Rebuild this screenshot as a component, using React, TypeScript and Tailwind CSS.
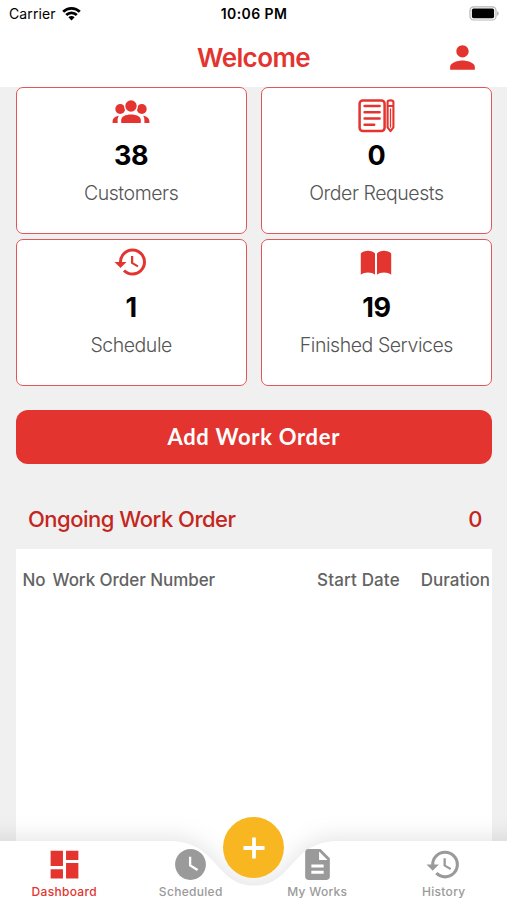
import React from "react";
import {
  MdDashboard,
  MdDescription,
  MdHistory,
  MdPerson,
  MdWatchLater,
} from "react-icons/md";

const CustomersIcon = () => (
  <svg width="38" height="24" viewBox="0 0 38 24" fill="currentColor">
    <circle cx="8.2" cy="9" r="4.9" />
    <circle cx="29.8" cy="9" r="4.9" />
    <circle cx="19" cy="6" r="7" fill="white" />
    <circle cx="19" cy="6" r="5.7" />
    <path d="M9.2 23v-2.6c0-3.7 4.2-5.8 9.8-5.8s9.8 2.1 9.8 5.8V23z" />
    <path d="M.6 23v-1.6c0-2.9 2.4-5.1 6.3-5.6-1 1.5-1.3 2.9-1.3 4.6V23z" />
    <path d="M37.4 23v-1.6c0-2.9-2.4-5.1-6.3-5.6 1 1.5 1.3 2.9 1.3 4.6V23z" />
  </svg>
);

const OrderIcon = () => (
  <svg
    width="37"
    height="34"
    viewBox="0 0 37 34"
    fill="none"
    stroke="currentColor"
    strokeWidth="2.5"
    strokeLinecap="round"
    strokeLinejoin="round"
  >
    <rect x="1.6" y="1.4" width="25" height="30.6" rx="3.2" />
    <path d="M6.6 7h15M6.6 13.2h15M6.6 19.6h15M6.6 25.8h9.6" />
    <path
      d="M29.6 3c0-1.200.8-1.600 2.900-1.600s2.900.4 2.900 1.600v25.400l-2.900 3.800-2.900-3.800zM29.600 7h5.800"
      strokeWidth="2.1"
    />
    <path d="M32.5 10v18" strokeWidth="1.3" />
  </svg>
);

const BookIcon = () => (
  <svg width="32" height="26" viewBox="0 0 32 26" fill="currentColor">
    <path d="M.8 3.600C3.400.4 11.800-.5 15 3.600v21.200c-3.300-3-10.700-3-14.200 0z" />
    <path d="M17 3.600c3.200-4.100 11.600-3.200 14.200 0v21.200c-3.500-3-10.900-3-14.200 0z" />
  </svg>
);

const stats = [
  { icon: <CustomersIcon />, offset: "pt-[12px]", count: 38, label: "Customers" },
  { icon: <OrderIcon />, offset: "pt-[11px]", count: 0, label: "Order Requests" },
  { icon: <MdHistory size={36} />, offset: "pt-[4px]", count: 1, label: "Schedule" },
  { icon: <BookIcon />, offset: "pt-[10px]", count: 19, label: "Finished Services" },
];

const tabs = [
  { icon: MdDashboard, label: "Dashboard", color: "text-[#e3342f]" },
  { icon: MdWatchLater, label: "Scheduled", color: "text-[#9a9a9a]" },
  { icon: MdDescription, label: "My Works", color: "text-[#9a9a9a]" },
  { icon: MdHistory, label: "History", color: "text-[#9a9a9a]" },
];

function StatusBar() {
  return (
    <div className="grid h-[27px] grid-cols-3 items-center pl-[9px] pr-[8px] text-[14px] text-black">
      <div className="flex items-center gap-[6px]">
        <span className="tracking-[0.1px]">Carrier</span>
        <svg width="19" height="15" viewBox="0 0 19 15" fill="none" stroke="black" strokeWidth="2.7">
          <path d="M1.2 5.8a11.7 11.7 0 0 1 16.6 0" />
          <path d="M4.2 9a7.5 7.5 0 0 1 10.6 0" />
          <path d="M9.5 14.4 6.4 11.3a4.4 4.4 0 0 1 6.2 0z" fill="black" stroke="none" />
        </svg>
      </div>
      <span className="whitespace-nowrap text-center font-semibold tracking-[0.4px]">10:06 PM</span>
      <svg className="ml-auto" width="31" height="15" viewBox="0 0 31 15">
        <rect x="2" y=".8" width="26" height="13.200" rx="3.600" fill="white" stroke="#b5b5b5" strokeWidth="1.2" />
        <rect x="3.900" y="2.600" width="22.200" height="9.600" rx="1.600" fill="black" />
        <path d="M29.200 5.200c1.900.6 1.900 4 0 4.600z" fill="#aaa" />
      </svg>
    </div>
  );
}

function BottomNav() {
  return (
    <nav className="absolute inset-x-0 bottom-0 h-[100px]">
      <svg className="absolute inset-0 overflow-visible" width="507" height="100" viewBox="0 0 507 100">
        <path
          d="M-40 41H168C190 41 201 48 213 61C226 75 234 85.500 254 85.500S282 75 295 61C307 48 318 41 340 41H547V160H-40z"
          fill="white"
          className="drop-shadow-[0_-4px_11px_rgba(0,0,0,0.1)]"
        />
      </svg>
      <div className="relative grid h-full grid-cols-4 pl-[1px] pt-[46px] text-[12px] font-medium">
        {tabs.map(({ icon: Icon, label, color }) => (
          <div key={label} className={`flex flex-col items-center ${color}`}>
            <Icon size={37} />
            <span className="mt-[1px] leading-4 tracking-[0.3px]">{label}</span>
          </div>
        ))}
      </div>
      <button className="absolute left-[223px] top-[17px] flex size-[61px] items-center justify-center rounded-full bg-[#f8b720]">
        <svg width="22" height="22" viewBox="0 0 22 22" stroke="white" strokeWidth="3.800">
          <path d="M11 .5v21M.5 11h21" />
        </svg>
      </button>
    </nav>
  );
}

export default function App() {
  return (
    <div className="relative flex h-[900px] w-[507px] flex-col overflow-hidden bg-[#f0f0f0] font-['Inter',sans-serif]">
      <header className="h-[87px] shrink-0 bg-white">
        <StatusBar />
        <div className="grid h-[60px] grid-cols-[1fr_auto_1fr] items-center px-[26px] text-[#e3342f]">
          <h1 className="col-start-2 text-[26px] font-semibold tracking-[-0.6px]">Welcome</h1>
          <MdPerson className="ml-auto" size={37} />
        </div>
      </header>

      <main className="flex flex-1 flex-col pl-[15.500px] pr-[15px]">
        <section className="grid grid-cols-2 gap-x-[14px] gap-y-[4.500px]">
          {stats.map((stat) => (
            <div
              key={stat.label}
              className="flex h-[147px] flex-col items-center rounded-[7px] border-[1.5px] border-[#e0575a] bg-white"
            >
              <div className={`h-[48px] text-[#e3342f] ${stat.offset}`}>{stat.icon}</div>
              <strong className="mt-[2px] text-[27px] font-bold leading-9 tracking-[-0.4px] text-black">
                {stat.count}
              </strong>
              <span className="mt-[5px] text-[19.500px] font-light leading-7 tracking-[-0.45px] text-[#555]">
                {stat.label}
              </span>
            </div>
          ))}
        </section>

        <button className="mt-[24.500px] h-[54px] shrink-0 rounded-[12px] bg-[#e3342f] pb-[2px] font-['Lato',sans-serif] text-[22px] font-bold tracking-[0.7px] text-white">
          Add Work Order
        </button>

        <div className="mt-[38px] flex h-[34px] items-center justify-between pl-[12.500px] pr-[10px] text-[22px] font-medium tracking-[-0.5px] text-[#c4261d]">
          <h2>Ongoing Work Order</h2>
          <span>0</span>
        </div>

        <section className="mt-[12.500px] flex-1 bg-white">
          <div className="flex whitespace-nowrap pl-[7px] pr-[2px] pt-[19.500px] text-[17px] font-medium leading-6 text-[#636363]">
            <span className="w-[30px]">No</span>
            <span className="flex-1 tracking-[-0.05px]">Work Order Number</span>
            <span className="mr-[21px] tracking-[0.15px]">Start Date</span>
            <span>Duration</span>
          </div>
        </section>
      </main>

      <BottomNav />
    </div>
  );
}
